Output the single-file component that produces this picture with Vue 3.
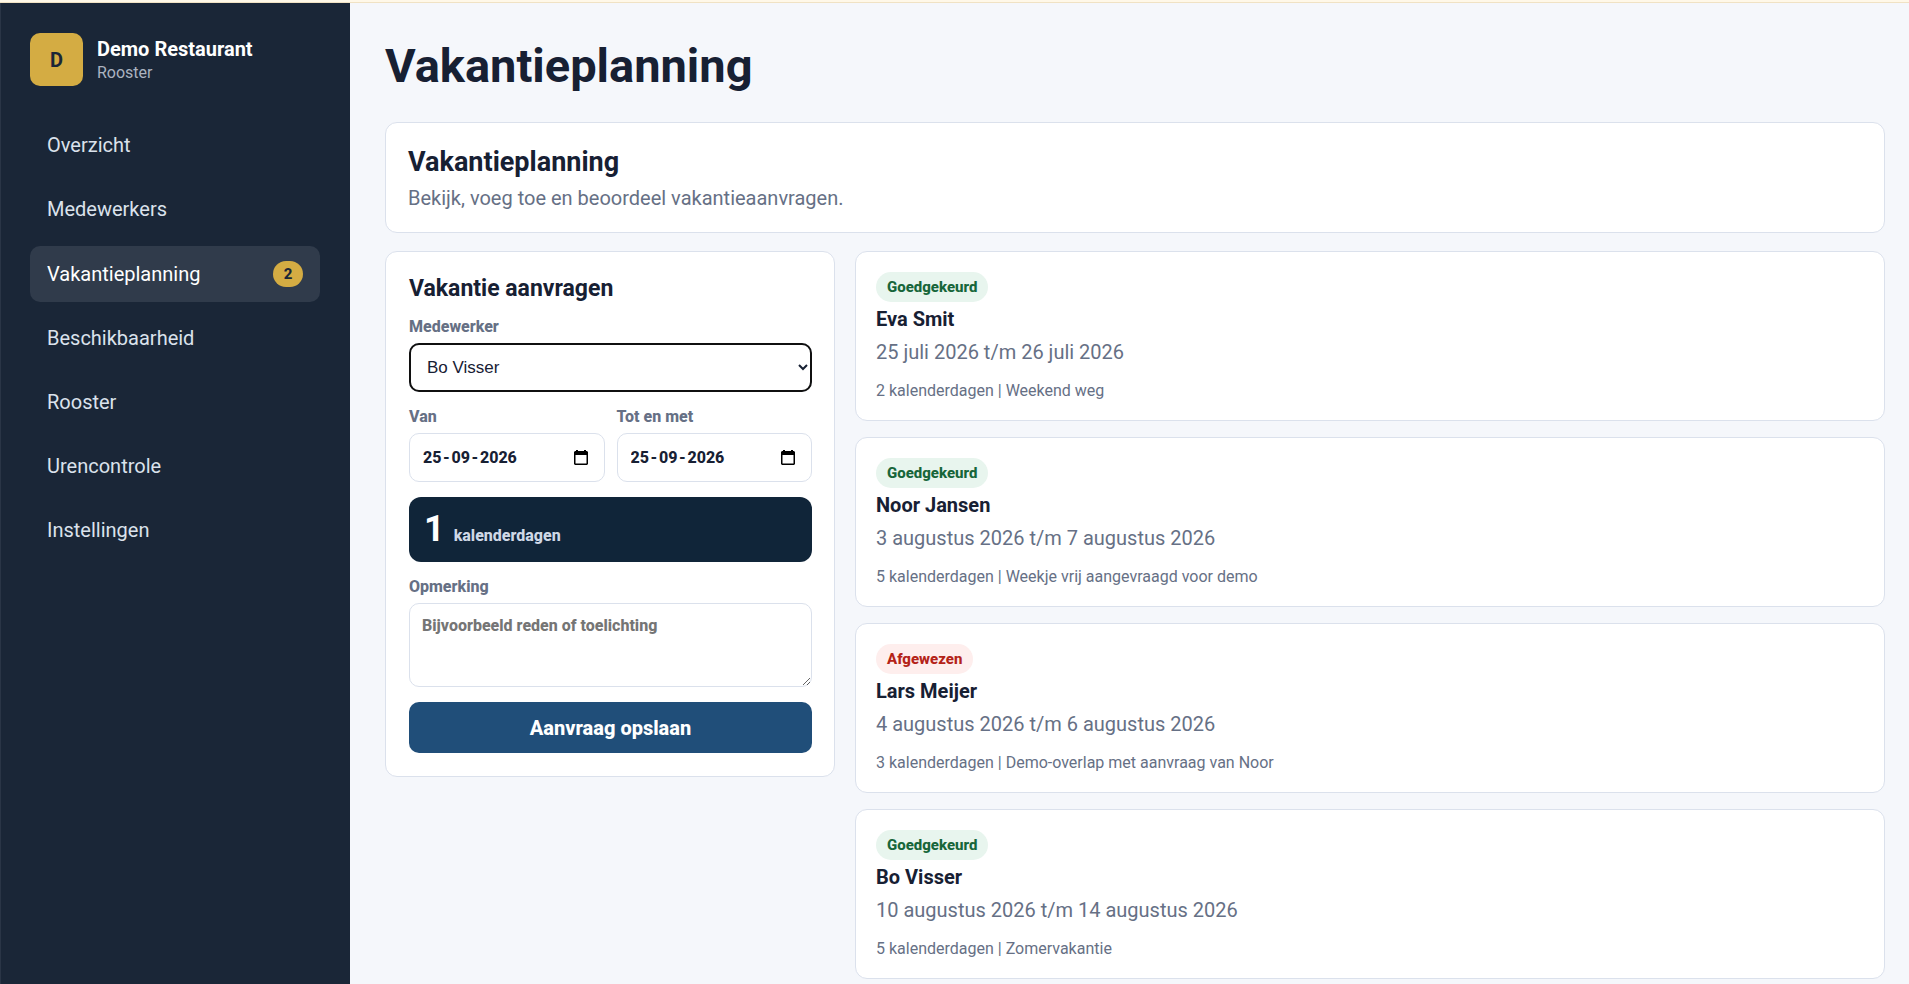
<script setup>
import { ref } from 'vue'

const navItems = [
  { label: 'Overzicht' },
  { label: 'Medewerkers' },
  { label: 'Vakantieplanning', badge: 2, active: true },
  { label: 'Beschikbaarheid' },
  { label: 'Rooster' },
  { label: 'Urencontrole' },
  { label: 'Instellingen' },
]

const employees = ['Bo Visser', 'Eva Smit', 'Lars Meijer', 'Noor Jansen']
const employee = ref('Bo Visser')
const from = ref('25\u200A-\u200A09\u200A-\u200A2026')
const until = ref('25\u200A-\u200A09\u200A-\u200A2026')
const note = ref('')

const requests = [
  { status: 'Goedgekeurd', name: 'Eva Smit', period: '25 juli 2026 t/m 26 juli 2026', detail: '2 kalenderdagen | Weekend weg' },
  { status: 'Goedgekeurd', name: 'Noor Jansen', period: '3 augustus 2026 t/m 7 augustus 2026', detail: '5 kalenderdagen | Weekje vrij aangevraagd voor demo' },
  { status: 'Afgewezen', name: 'Lars Meijer', period: '4 augustus 2026 t/m 6 augustus 2026', detail: '3 kalenderdagen | Demo-overlap met aanvraag van Noor' },
  { status: 'Goedgekeurd', name: 'Bo Visser', period: '10 augustus 2026 t/m 14 augustus 2026', detail: '5 kalenderdagen | Zomervakantie' },
]
</script>

<template>
  <div class="app">
    <div class="strip"></div>
    <div class="shell">
      <aside class="sidebar">
        <div class="brand">
          <div class="logo">D</div>
          <div class="brand-text">
            <strong>Demo Restaurant</strong>
            <span>Rooster</span>
          </div>
        </div>
        <nav class="nav">
          <a
            v-for="item in navItems"
            :key="item.label"
            href="#"
            class="nav-item"
            :class="{ active: item.active }"
            :aria-current="item.active ? 'page' : undefined"
          >
            <span>{{ item.label }}</span>
            <span v-if="item.badge" class="badge">{{ item.badge }}</span>
          </a>
        </nav>
      </aside>

      <main class="main">
        <h1>Vakantieplanning</h1>
        <section class="card intro">
          <h2>Vakantieplanning</h2>
          <p>Bekijk, voeg toe en beoordeel vakantieaanvragen.</p>
        </section>

        <div class="columns">
          <form class="card form" @submit.prevent>
            <h3>Vakantie aanvragen</h3>
            <div class="field">
              <label for="employee">Medewerker</label>
              <select id="employee" v-model="employee">
                <option v-for="name in employees" :key="name">{{ name }}</option>
              </select>
            </div>
            <div class="dates">
              <div class="field">
                <label for="from">Van</label>
                <div class="date-box">
                  <input id="from" v-model="from" type="text" />
                  <svg viewBox="0 0 14 16" width="14" height="16" aria-hidden="true">
                    <path fill="#000" fill-rule="evenodd" d="M2 0h2v1h6V0h2v1h1l1 1v12l-1 1H1l-1-1V2l1-1h1zM1.500 5v8.500h11V5z" />
                  </svg>
                </div>
              </div>
              <div class="field">
                <label for="until">Tot en met</label>
                <div class="date-box">
                  <input id="until" v-model="until" type="text" />
                  <svg viewBox="0 0 14 16" width="14" height="16" aria-hidden="true">
                    <path fill="#000" fill-rule="evenodd" d="M2 0h2v1h6V0h2v1h1l1 1v12l-1 1H1l-1-1V2l1-1h1zM1.500 5v8.500h11V5z" />
                  </svg>
                </div>
              </div>
            </div>
            <div class="days">
              <strong>1</strong>
              <span>kalenderdagen</span>
            </div>
            <div class="field">
              <label for="note">Opmerking</label>
              <textarea id="note" v-model="note" placeholder="Bijvoorbeeld reden of toelichting"></textarea>
            </div>
            <button type="submit">Aanvraag opslaan</button>
          </form>

          <div class="list">
            <article v-for="item in requests" :key="item.name" class="card request">
              <span class="pill" :class="{ rejected: item.status === 'Afgewezen' }">{{ item.status }}</span>
              <h4>{{ item.name }}</h4>
              <p class="period">{{ item.period }}</p>
              <p class="detail">{{ item.detail }}</p>
            </article>
          </div>
        </div>
      </main>
    </div>
  </div>
</template>

<style>
body {
  margin: 0;
  background: #f5f7fb;
}
</style>

<style scoped>
.app,
.app * {
  box-sizing: border-box;
}

.app {
  display: flex;
  flex-direction: column;
  min-height: 100vh;
  font-family: Roboto, "Liberation Sans", sans-serif;
  font-size: 20px;
  line-height: 24px;
  color: #172033;
}

h1,
h2,
h3,
h4,
p {
  margin: 0;
}

.strip {
  height: 3px;
  background: #fff8e8;
  border-bottom: 1px solid #f0e2c4;
}

.shell {
  flex: 1;
  display: grid;
  grid-template-columns: 350px minmax(0, 1fr);
}

.sidebar {
  padding: 30px 30px 30px 29px;
  background: #1a2637;
  border-left: 1px solid #2a3546;
}

.brand {
  display: flex;
  align-items: center;
  gap: 14px;
  margin-bottom: 32px;
}

.logo {
  display: grid;
  place-items: center;
  width: 53px;
  height: 53px;
  border-radius: 10px;
  background: #d4ac43;
  color: #1a2637;
  font-weight: 700;
}

.brand-text {
  display: flex;
  flex-direction: column;
  gap: 2px;
}

.brand-text strong {
  color: #fff;
}

.brand-text span {
  font-size: 16px;
  line-height: 19px;
  color: #abb3c0;
}

.nav {
  display: flex;
  flex-direction: column;
  gap: 9px;
}

.nav-item {
  display: flex;
  align-items: center;
  justify-content: space-between;
  padding: 15px 17px;
  border-radius: 10px;
  line-height: 25px;
  color: #dbe2ec;
  text-decoration: none;
}

.nav-item.active {
  background: #303b4b;
  color: #fff;
}

.badge {
  min-width: 30px;
  border-radius: 13px;
  background: #d4ac43;
  color: #1a2637;
  font-size: 15px;
  line-height: 26px;
  font-weight: 800;
  text-align: center;
}

.main {
  padding: 34px 24px 4px 35px;
}

h1 {
  margin-bottom: 27px;
  font-size: 47px;
  line-height: 58px;
}

.card {
  border: 1px solid #dbe1ec;
  border-radius: 12px;
  background: #fff;
}

.intro {
  margin-bottom: 18px;
  padding: 22px;
}

.intro h2 {
  margin-bottom: 7px;
  font-size: 27px;
  line-height: 34px;
}

.intro p,
.period,
.detail {
  color: #667085;
}

.columns {
  display: grid;
  grid-template-columns: minmax(0, 450px) minmax(0, 1fr);
  align-items: start;
  gap: 20px;
}

.form {
  display: grid;
  grid-template-columns: minmax(0, 1fr);
  gap: 15px;
  padding: 23px 22px 23px 23px;
}

.form h3 {
  font-size: 23px;
  line-height: 27px;
}

.field {
  display: grid;
  grid-template-columns: minmax(0, 1fr);
  gap: 7px;
}

.field label {
  font-size: 16px;
  line-height: 19px;
  font-weight: 800;
  color: #667085;
}

.field select {
  width: 100%;
  height: 49px;
  padding: 0 0 0 13px;
  border: 1px solid #dbe1ec;
  border-radius: 10px;
  outline: 2px solid #101010;
  outline-offset: -2px;
  background: #fff;
  color: #172033;
  font-family: "Liberation Sans", Arial, sans-serif;
  font-size: 17px;
}

.dates {
  display: grid;
  grid-template-columns: repeat(2, minmax(0, 1fr));
  gap: 12px;
}

.date-box {
  display: flex;
  align-items: center;
  height: 49px;
  padding: 0 16px 0 13px;
  border: 1px solid #dbe1ec;
  border-radius: 10px;
  background: #fff;
}

.date-box input {
  flex: 1;
  min-width: 0;
  padding: 0;
  border: 0;
  outline: 0;
  background: transparent;
  color: #172033;
  font-family: inherit;
  font-size: 16px;
  font-weight: 800;
}

.days {
  display: flex;
  align-items: baseline;
  gap: 9px;
  padding: 11px 15px 12px;
  border-radius: 12px;
  background: #102539;
}

.days strong {
  color: #fff;
  font-size: 36px;
  line-height: 42px;
}

.days span {
  color: #cfd8e6;
  font-size: 16px;
  line-height: 19px;
  font-weight: 800;
}

.field textarea {
  display: block;
  width: 100%;
  height: 84px;
  padding: 12px;
  border: 1px solid #dbe1ec;
  border-radius: 10px;
  background: #fff;
  color: #172033;
  font-family: inherit;
  font-size: 16px;
  font-weight: 800;
  line-height: 20px;
  resize: vertical;
}

.field textarea::placeholder {
  color: #757575;
}

.form button {
  height: 51px;
  border: 0;
  border-radius: 10px;
  background: #204e79;
  color: #fff;
  font-family: inherit;
  font-size: 20px;
  font-weight: 800;
}

.list {
  display: grid;
  gap: 16px;
}

.request {
  display: flex;
  flex-direction: column;
  align-items: flex-start;
  padding: 20px;
}

.pill {
  margin-bottom: 5px;
  padding: 0 11px;
  border-radius: 15px;
  background: #e8f5ee;
  color: #17663a;
  font-size: 15px;
  line-height: 30px;
  font-weight: 800;
}

.pill.rejected {
  background: #feeeed;
  color: #b42318;
}

.request h4 {
  margin-bottom: 9px;
  font-size: 20px;
}

.period {
  margin-bottom: 17px;
}

.detail {
  font-size: 16px;
  line-height: 19px;
}
</style>
